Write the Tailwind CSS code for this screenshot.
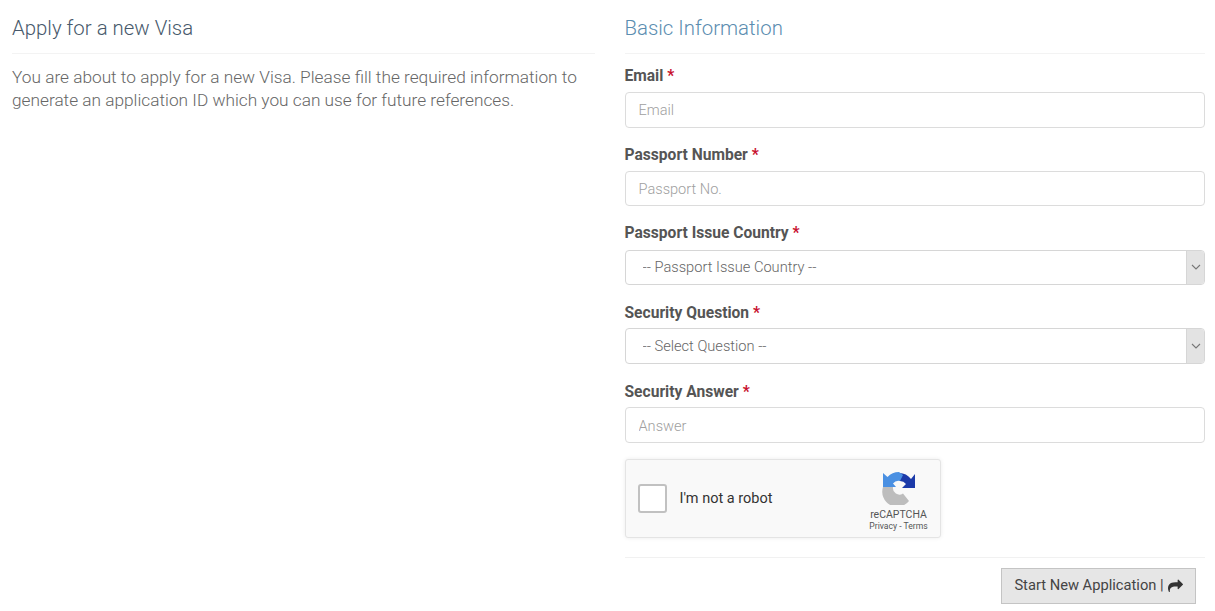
<!DOCTYPE html>
<html lang="en">
<head>
<meta charset="utf-8">
<title>Apply for a new Visa</title>
<script src="https://cdn.jsdelivr.net/npm/@tailwindcss/browser@4"></script>
</head>
<body class="bg-white font-['Roboto',sans-serif] text-[#555] overflow-hidden">
<div class="w-[1215px] h-[611px] flex items-start">
  <section class="w-[583px] ml-3 shrink-0">
    <h1 class="h-[54px] pt-[15px] border-b border-[#f3f3f3] text-[20.4px] leading-[26px] font-light text-[#47596b]">Apply for a new Visa</h1>
    <p class="mt-[11.5px] w-[580px] text-[17.25px] leading-[23.5px] font-light text-[#666]">You are about to apply for a new Visa. Please fill the required information to generate an application ID which you can use for future references.</p>
  </section>
  <form class="w-[580.5px] ml-[29.5px] shrink-0">
    <h2 class="h-[54px] pt-[15px] border-b border-[#f3f3f3] text-[20.4px] leading-[26px] font-light text-[#5b8db0]">Basic Information</h2>

    <label class="block mt-[11px] h-[20px] text-[15.6px] leading-[22px] font-bold text-[#555]">Email <span class="text-[#c8102e]">*</span></label>
    <input class="block mt-[7px] w-full h-[35.5px] px-[13px] border border-[#dcdcdc] rounded-[4px] text-[14.6px] font-light placeholder:text-[#a0a0a0]" placeholder="Email">

    <label class="block mt-[16.25px] h-[20px] text-[15.6px] leading-[22px] font-bold text-[#555]">Passport Number <span class="text-[#c8102e]">*</span></label>
    <input class="block mt-[7px] w-full h-[35.5px] px-[13px] border border-[#dcdcdc] rounded-[4px] text-[14.6px] font-light placeholder:text-[#a0a0a0]" placeholder="Passport No.">

    <label class="block mt-[16.25px] h-[20px] text-[15.6px] leading-[21px] font-bold text-[#555]">Passport Issue Country <span class="text-[#c8102e]">*</span></label>
    <div class="mt-[7px] flex h-[35.5px] border border-[#d6d6d6] rounded-[4px] overflow-hidden">
      <select class="flex-1 min-w-0 appearance-none pl-[17px] pt-[2px] text-[14.65px] font-light text-[#666] outline-none"><option>-- Passport Issue Country --</option></select>
      <span class="w-[18px] flex items-center justify-center bg-[#e3e3e3] border-l border-[#d6d6d6]"><svg width="10" height="6" viewBox="0 0 10 6" fill="none" stroke="#777" stroke-width="1.1"><path d="M1 1l4 4 4-4"/></svg></span>
    </div>

    <label class="block mt-[16.25px] h-[20px] text-[15.6px] leading-[25px] font-bold text-[#555]">Security Question <span class="text-[#c8102e]">*</span></label>
    <div class="mt-[7px] flex h-[35.5px] border border-[#d6d6d6] rounded-[4px] overflow-hidden">
      <select class="flex-1 min-w-0 appearance-none pl-[17px] pt-[2px] text-[14.65px] font-light text-[#666] outline-none"><option>-- Select Question --</option></select>
      <span class="w-[18px] flex items-center justify-center bg-[#e3e3e3] border-l border-[#d6d6d6]"><svg width="10" height="6" viewBox="0 0 10 6" fill="none" stroke="#777" stroke-width="1.1"><path d="M1 1l4 4 4-4"/></svg></span>
    </div>

    <label class="block mt-[16.25px] h-[20px] text-[15.6px] leading-[25px] font-bold text-[#555]">Security Answer <span class="text-[#c8102e]">*</span></label>
    <input class="block mt-[7px] w-full h-[35.5px] px-[13px] pt-[2px] border border-[#dcdcdc] rounded-[4px] text-[14.6px] font-light placeholder:text-[#a0a0a0]" placeholder="Answer">

    <div class="mt-[16.5px] w-[316px] h-[79px] flex items-center bg-[#f9f9f9] border border-[#e4e4e4] rounded-[3px] shadow-[0_0_4px_rgba(0,0,0,0.08)]">
      <span class="ml-[12px] w-[29px] h-[29px] bg-white border-2 border-[#c1c1c1] rounded-[3px]"></span>
      <span class="ml-[13px] text-[14.5px] text-[#333]">I'm not a robot</span>
      <div class="ml-auto mr-[11px] mt-[6px] w-[60px] flex flex-col items-center">
        <svg class="mb-[3px]" width="34" height="34" viewBox="0 0 34 34">
          <path d="M1 16H11A6.500 6.500 0 0 0 21 22.500L27 30A15 15 0 0 1 1 16Z" fill="#bdbdbd"/>
          <path d="M16 2A15 15 0 0 1 29 8L33 3V17H20L24 13A8 8 0 0 0 18 10L16 7Z" fill="#1c3aa9"/>
          <path d="M17 1A16 16 0 0 0 5.500 6L1 2V16H14L11 12.500A7 7 0 0 1 18 10L21 4Z" fill="#4a90e2"/>
        </svg>
        <span class="text-[10.5px] leading-[13px] text-[#555]">reCAPTCHA</span>
        <span class="text-[8.6px] leading-[11px] text-[#555]">Privacy - Terms</span>
      </div>
    </div>

    <div class="mt-[19px] border-t border-[#f1f1f1] flex justify-end pr-[9px] pt-[9.500px]">
      <button type="button" class="h-[36px] w-[195px] flex items-center justify-center gap-1 bg-[#e6e6e6] border border-[#c4c4c4] text-[14.7px] text-[#444]">Start New Application |
        <svg width="15" height="13" viewBox="0 0 1792 1536" fill="#333"><path d="M1792 640q0 26-19 45l-512 512q-19 19-45 19t-45-19-19-45v-256h-224q-98 0-175.500 6t-154 21.500-133 42.500-105.500 69.500-80 101-48.500 138.500-17.500 181q0 55 5 123 0 6 2.500 23.500t2.500 26.500q0 15-8.500 25t-23.500 10q-16 0-28-17-7-9-13-22t-13.500-30-10.500-24q-127-285-127-451 0-199 53-333 162-403 875-403h224v-256q0-26 19-45t45-19 45 19l512 512q19 19 19 45z"/></svg>
      </button>
    </div>
  </form>
</div>
</body>
</html>
